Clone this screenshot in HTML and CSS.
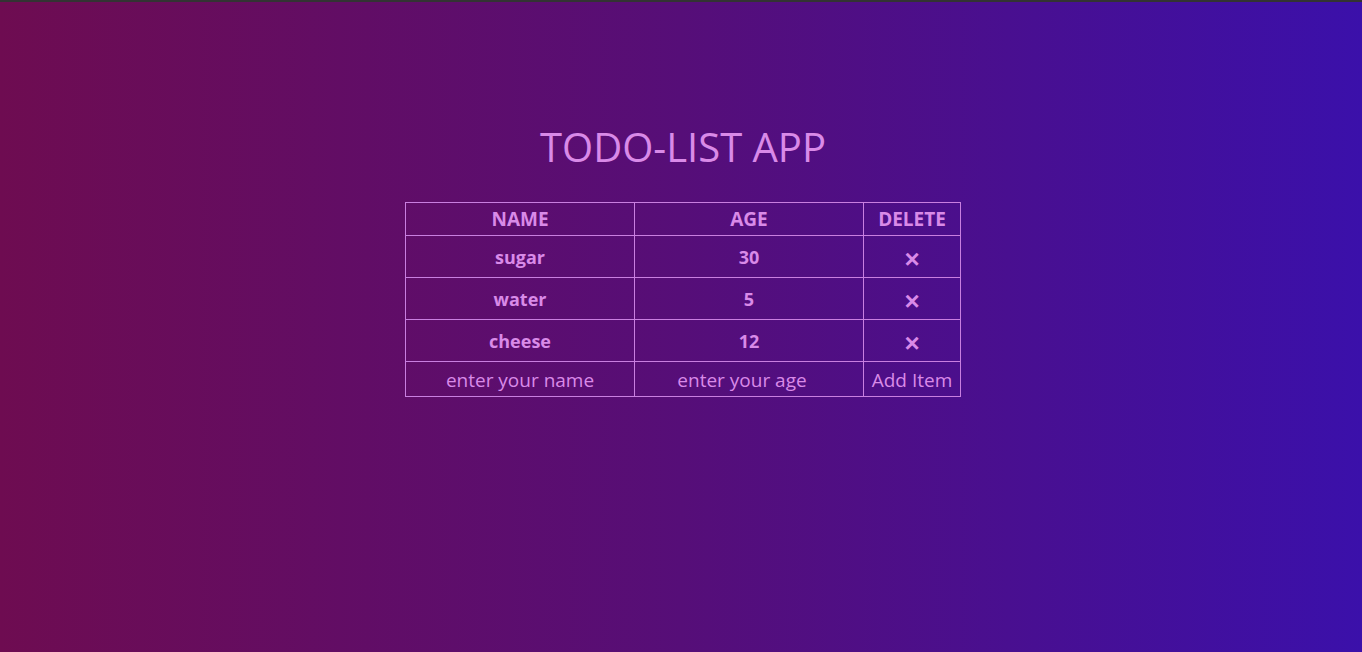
FILE: index.html
```html
<!DOCTYPE html>
<html lang="en">
<head>
<meta charset="utf-8">
<title>Todo-list app</title>
<link rel="stylesheet" href="styles.css">
</head>
<body>
<main class="app">
  <h1 class="title">TODO-LIST APP</h1>
  <table class="todo">
    <colgroup>
      <col class="c-name"><col class="c-age"><col class="c-del">
    </colgroup>
    <thead>
      <tr><th>NAME</th><th>AGE</th><th>DELETE</th></tr>
    </thead>
    <tbody>
      <tr class="item"><td>sugar</td><td>30</td><td><button class="del">&times;</button></td></tr>
      <tr class="item"><td>water</td><td>5</td><td><button class="del">&times;</button></td></tr>
      <tr class="item"><td>cheese</td><td>12</td><td><button class="del">&times;</button></td></tr>
      <tr class="entry">
        <td><input class="field" type="text" placeholder="enter your name"></td>
        <td><input class="field field-age" type="text" placeholder="enter your age"></td>
        <td><button class="add">Add Item</button></td>
      </tr>
    </tbody>
  </table>
</main>
</body>
</html>
```

FILE: styles.css
```css
html, body {
  height: 100%;
}
body {
  margin: 0;
  box-sizing: border-box;
  border-top: 2px solid #333;
  background: linear-gradient(to right, #6e0c51, #560e78 50%, #3b10aa);
  font-family: "Open Sans", "Noto Sans", sans-serif;
  color: #d98ae8;
}
.app {
  display: flex;
  flex-direction: column;
  align-items: center;
  padding-top: 121px;
  padding-left: 4px;
}
.title {
  margin: 0 0 31px;
  font-size: 40px;
  font-weight: 500;
  line-height: 48px;
  color: #d98ae8;
}
.todo {
  border-collapse: collapse;
  table-layout: fixed;
  width: 555px;
}
.c-name, .c-age { width: 229px; }
.c-del { width: 97px; }
.todo th, .todo td {
  border: 1px solid #c97fe0;
  text-align: center;
  padding: 0;
  font-size: 18px;
  font-weight: 700;
}
.todo th { font-size: 19px; height: 32px; }
.item td { height: 41px; }
.entry td { height: 35px; padding-top: 2px; box-sizing: border-box; }
.del {
  background: none;
  border: 0;
  color: #d98ae8;
  font: 700 26px/20px "Liberation Sans", sans-serif;
  padding: 0;
  margin-top: 8px;
  cursor: pointer;
}
.field {
  width: 100%;
  box-sizing: border-box;
  background: transparent;
  border: 0;
  outline: none;
  text-align: center;
  font: 400 19px "Open Sans", "Noto Sans", sans-serif;
  color: #d98ae8;
  padding: 0;
}
.field-age {
  padding-right: 14px;
}
.field::placeholder {
  color: #d98ae8;
  opacity: 1;
}
.add {
  background: transparent;
  border: 0;
  color: #d98ae8;
  font: 400 19px "Open Sans", "Noto Sans", sans-serif;
  padding: 0;
  cursor: pointer;
}
```
